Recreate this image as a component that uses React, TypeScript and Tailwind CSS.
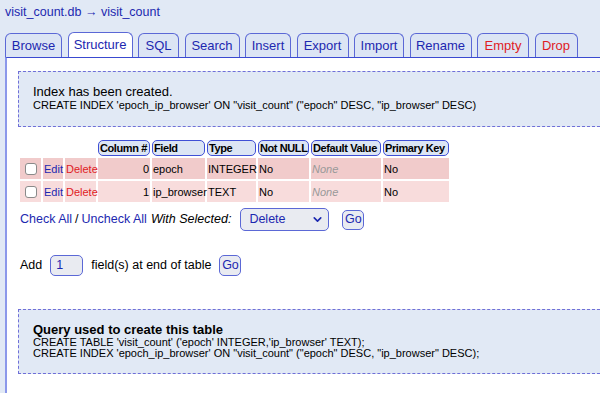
import { ChevronDown } from 'lucide-react';

const tabs = [
  { label: 'Browse', w: 'w-[57px]' },
  { label: 'Structure', w: 'w-[65px]', active: true },
  { label: 'SQL', w: 'w-[41px]' },
  { label: 'Search', w: 'w-[55px]' },
  { label: 'Insert', w: 'w-[46px]' },
  { label: 'Export', w: 'w-[52px]' },
  { label: 'Import', w: 'w-[50px]' },
  { label: 'Rename', w: 'w-[62px]' },
  { label: 'Empty', w: 'w-[52px]', danger: true },
  { label: 'Drop', w: 'w-[43px]', danger: true },
];

const headers = [
  { label: 'Column #', w: 'w-[52px]' },
  { label: 'Field', w: 'w-[53px]' },
  { label: 'Type', w: 'w-[49px]' },
  { label: 'Not NULL', w: 'w-[51px]' },
  { label: 'Default Value', w: 'w-[70px]' },
  { label: 'Primary Key', w: 'w-[66px]' },
];

const rows = [
  { idx: 0, field: 'epoch', type: 'INTEGER', bg: 'bg-[#f1cbcb]' },
  { idx: 1, field: 'ip_browser', type: 'TEXT', bg: 'bg-[#f8dcdc]' },
];

const App = () => {
  return (
    <div className="w-[600px] h-[393px] overflow-hidden bg-[#e1e9f5] font-['Liberation_Sans',Arial,sans-serif] text-black">
      {/* Title */}
      <div className="pl-[5px] pt-[4px] h-[34px] text-[12.5px] leading-[16px] text-[#1c28b0]">
        visit_count.db → visit_count
      </div>

      {/* Tabs */}
      <div className="flex items-end gap-[5.5px] pl-[5px] h-[23px] relative z-10">
        {tabs.map((t) => (
          <div
            key={t.label}
            className={`${t.w} h-[24px] flex items-center justify-center border border-b-0 border-[#5b68d6] rounded-t-[6px] text-[13px] ${
              t.active ? 'bg-white h-[25px]' : 'bg-[#dce5f4]'
            } ${t.danger ? 'text-[#e01b24]' : 'text-[#1c28b0]'}`}
          >
            {t.label}
          </div>
        ))}
      </div>

      {/* Panel */}
      <div className="ml-[5px] bg-white border-l-2 border-t border-l-[#8b98ea] border-t-[#3a4ad0] h-[340px] pt-[13px] pl-[11px]">
        {/* Message */}
        <div className="bg-[#e1e9f5] border border-dashed border-[#6f6fd8] border-r-0 pl-[14px] pt-[13px] pb-[15px]">
          <div className="text-[13px] leading-[14px]">Index has been created.</div>
          <div className="text-[11px] leading-[12px]">
            CREATE INDEX 'epoch_ip_browser' ON "visit_count" ("epoch" DESC, "ip_browser" DESC)
          </div>
        </div>

        {/* Columns table */}
        <table className="mt-[11px] table-fixed w-[433px] border-separate border-spacing-[2px] text-[11px] leading-[14px]">
          <thead>
            <tr>
              <th className="w-[21px]"></th>
              <th className="w-[20px]"></th>
              <th className="w-[31px]"></th>
              {headers.map((h) => (
                <th
                  key={h.label}
                  className={`${h.w} h-[16px] px-[1px] text-left font-bold text-[11px] tracking-[-0.4px] bg-[#dce5f4] border border-[#3f4fd6] rounded-[5px] whitespace-nowrap`}
                >
                  {h.label}
                </th>
              ))}
            </tr>
          </thead>
          <tbody>
            {rows.map((r) => (
              <tr key={r.idx} className="h-[21px]">
                <td className={`${r.bg} pl-[5px]`}>
                  <div className="w-[12px] h-[12px] border border-[#8a8a8a] rounded-[3px] bg-white"></div>
                </td>
                <td className={`${r.bg} text-[#1c28b0] px-[1px]`}>Edit</td>
                <td className={`${r.bg} text-[#e01b24] px-[1px] whitespace-nowrap`}>Delete</td>
                <td className={`${r.bg} text-right px-[1px]`}>{r.idx}</td>
                <td className={`${r.bg} px-[1px] whitespace-nowrap`}>{r.field}</td>
                <td className={`${r.bg} px-[1px]`}>{r.type}</td>
                <td className={`${r.bg} px-[1px]`}>No</td>
                <td className={`${r.bg} px-[1px] italic text-[#999999]`}>None</td>
                <td className={`${r.bg} px-[1px]`}>No</td>
              </tr>
            ))}
          </tbody>
        </table>

        {/* Check all */}
        <div className="flex items-center mt-[4px] ml-[2px] h-[23px] text-[12.5px]">
          <span className="text-[#1c28b0]">Check All</span>
          <span className="mx-[3px]">/</span>
          <span className="text-[#1c28b0]">Uncheck All</span>
          <span className="ml-[4px] italic">With Selected:</span>
          <div className="ml-[9px] w-[89px] h-[23px] flex items-center justify-between pl-[8px] pr-[4px] bg-[#e9ebf1] border border-[#5b68d6] rounded-[5px] text-[#1c28b0]">
            <span>Delete</span>
            <ChevronDown size={13} strokeWidth={3} />
          </div>
          <div className="ml-[13px] w-[22px] h-[20px] flex items-center justify-center bg-[#e9ebf1] border border-[#5b68d6] rounded-[5px] text-[#1c28b0]">
            Go
          </div>
        </div>

        {/* Add field */}
        <div className="flex items-center mt-[24px] ml-[2px] h-[21px] text-[12.5px]">
          <span>Add</span>
          <div className="ml-[8px] w-[33px] h-[21px] flex items-center pl-[5px] bg-[#e9ebf1] border border-[#5b68d6] rounded-[5px] text-[#1c28b0]">
            1
          </div>
          <span className="ml-[8px]">field(s) at end of table</span>
          <div className="ml-[8px] w-[22px] h-[21px] flex items-center justify-center bg-[#e9ebf1] border border-[#5b68d6] rounded-[5px] text-[#1c28b0]">
            Go
          </div>
        </div>

        {/* Query box */}
        <div className="mt-[33px] bg-[#e1e9f5] border border-dashed border-[#6f6fd8] border-r-0 pl-[14px] pt-[13px] pb-[14px]">
          <div className="text-[13px] leading-[14px] font-bold">Query used to create this table</div>
          <div className="text-[11px] leading-[11px]">
            CREATE TABLE 'visit_count' ('epoch' INTEGER,'ip_browser' TEXT);
          </div>
          <div className="text-[11px] leading-[11px]">
            CREATE INDEX 'epoch_ip_browser' ON "visit_count" ("epoch" DESC, "ip_browser" DESC);
          </div>
        </div>
      </div>
    </div>
  );
};

export default App;
